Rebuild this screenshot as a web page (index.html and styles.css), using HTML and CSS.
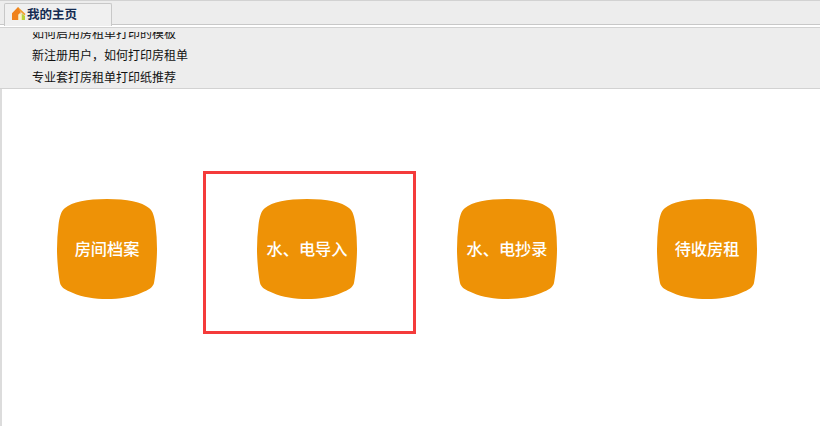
FILE: index.html
```html
<!DOCTYPE html>
<html lang="zh-CN">
<head>
  <meta charset="UTF-8" />
  <title>我的主页</title>
  <link rel="stylesheet" href="styles.css">
</head>
<body>
  <div class="tabbar">
    <div class="tab">
      <svg class="tab-icon" width="15" height="15" viewBox="0 0 15 15">
        <path d="M7 1 L14.5 8 L13.5 9.5 L7 3.5 Z" fill="#f0a030"/>
        <path d="M7 1 L1 7.2 L1 14 L7.5 14 L7.5 9 Q7.5 7.5 9 7.5 L10 7.5 Z" fill="#f0821c"/>
        <path d="M10.5 7.5 L14 10 L14 14 L10.5 14 Z" fill="#bcd23a"/>
        <path d="M7.5 14 L7.5 9 Q7.5 7.5 9 7.5 Q10.5 7.5 10.5 9 L10.5 14 Z" fill="#fbf3c8"/>
      </svg>
      <span>我的主页</span>
    </div>
  </div>
  <div class="notices">
    <div class="notice-list">
      <a>如何启用房租单打印的模板</a>
      <a>新注册用户，如何打印房租单</a>
      <a>专业套打房租单打印纸推荐</a>
    </div>
  </div>
  <div class="main">
    <div class="tiles">
      <div class="tile"><div class="blob">房间档案</div></div>
      <div class="tile selected"><div class="blob">水、电导入</div></div>
      <div class="tile"><div class="blob">水、电抄录</div></div>
      <div class="tile"><div class="blob">待收房租</div></div>
    </div>
  </div>
</body>
</html>
```

FILE: styles.css
```css
html, body {
  height: 100%;
}

body {
  margin: 0;
  display: flex;
  flex-direction: column;
  overflow: hidden;
  background-color: #fff;
  font-family: "Noto Sans CJK SC", "Liberation Sans", sans-serif;
  font-size: 12px;
  color: #111;
}

.tabbar {
  box-sizing: border-box;
  height: 25px;
  padding: 2px 0 0 4px;
  background-color: #ededed;
  border-top: 1px solid #d2d2d2;
  border-bottom: 1px solid #c8c8c8;
}

.tab {
  box-sizing: border-box;
  display: flex;
  align-items: center;
  width: 108px;
  height: 23px;
  padding: 0 0 4px 6px;
  background-color: #f0f0f0;
  border: 1px solid #c8c8c8;
  border-bottom: none;
  border-radius: 2px 2px 0 0;
  font-size: 12.5px;
  font-weight: bold;
  color: #152c52;
}

.tab-icon {
  flex: none;
  margin-right: 1px;
}

.notices {
  box-sizing: border-box;
  height: 62px;
  margin-top: 2px;
  padding: 4px 0 0 32px;
  background-color: #ededed;
  border-top: 1px solid #d2d2d2;
  border-bottom: 1px solid #d2d2d2;
}

.notice-list {
  display: flex;
  flex-direction: column;
  justify-content: flex-end;
  height: 56px;
  overflow: hidden;
}

.notice-list a {
  flex: none;
  height: 22px;
  line-height: 22px;
}

.main {
  flex: 1;
  border-left: 2px solid #dcdcdc;
}

.tiles {
  display: grid;
  grid-template-columns: repeat(4, 200px);
  padding: 110px 0 0 5px;
}

.tile {
  position: relative;
  display: flex;
  justify-content: center;
}

.blob {
  box-sizing: border-box;
  display: flex;
  align-items: center;
  justify-content: center;
  width: 100px;
  height: 100px;
  padding-bottom: 2px;
  background-color: #ee9206;
  clip-path: path("M50 0 C70 0 85 3 92 9 C96 12 97.5 18 98.5 26 C99.5 34 100 42 100 50 C100 62 98.5 76 97 84 C96 88 92 91 84 94 C75 98 62 100 50 100 C38 100 25 98 16 94 C8 91 4 88 3 84 C1.5 76 0 62 0 50 C0 42 .5 34 1.5 26 C2.5 18 4 12 8 9 C15 3 30 0 50 0 Z");
  font-size: 16.2px;
  font-weight: 500;
  color: #fff;
  white-space: nowrap;
}

.selected::after {
  content: "";
  position: absolute;
  top: -28px;
  left: -4px;
  width: 207px;
  height: 157px;
  border: 3px solid #f43b3b;
}
```
